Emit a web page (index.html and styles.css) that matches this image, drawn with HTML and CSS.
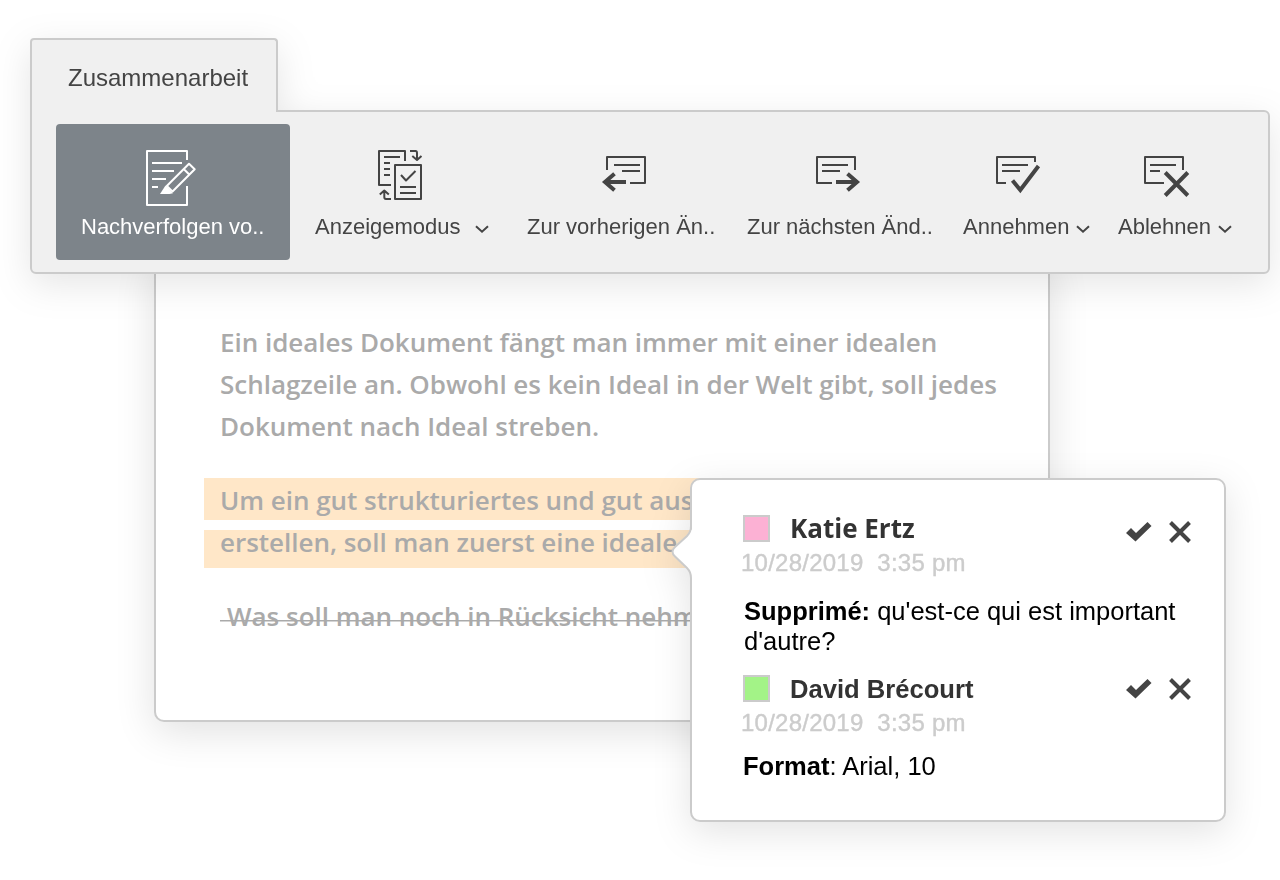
FILE: index.html
```html
<!DOCTYPE html>
<html lang="de">
<head>
<meta charset="utf-8">
<title>Zusammenarbeit</title>
<link rel="stylesheet" href="styles.css">
</head>
<body>
<header class="ribbon">
  <div class="tab">Zusammenarbeit</div>
  <nav class="bar">
    <div class="tool tool-active">
      <svg class="icon icon-track" viewBox="141 144 60 64"><path d="M187 160V151H147V205H187V186M152 163h30M152 171h22M152 179h14M152 187h6"/><path d="M189 163.700L194.700 169.300L172.500 191.500L166.800 186ZM183.700 169L189.500 174.700"/><path class="solid" d="M165.500 185.500L173 193.300L169.500 194H160Z"/></svg>
      <div class="label">Nachverfolgen vo..</div>
    </div>
    <div class="tool">
      <svg class="icon icon-mode" viewBox="370 144 60 64"><path d="M405 161V151H379V185H391M384 157h16M384 163h6M384 169h6M384 175h6M395 165H421V199H395ZM401 175L406 180.500L415.500 171M400 187h16M400 193h16M410 151H415.500Q417 151 417 153V159.500M412.300 156L417 160L421.500 156M391 199H386Q384.300 199 384.300 197V191M379.800 194.500L384.300 190.500L388.800 194.500"/></svg>
      <div class="label">Anzeigemodus<svg class="chev chev-far" viewBox="0 0 14 8"><path d="M1 1.200L7 6.700L13 1.200"/></svg></div>
    </div>
    <div class="tool">
      <svg class="icon icon-prev" viewBox="595 144 60 64"><path d="M607 170V157H645V183H630M614 165h26M622 171h18"/><path class="bold" d="M626 182H605M614.500 173.700L605 182L614.500 190.300"/></svg>
      <div class="label">Zur vorherigen Än..</div>
    </div>
    <div class="tool">
      <svg class="icon icon-next" viewBox="808 144 60 64"><path d="M855 170V157H817V183H832M822 165h26M822 171h18"/><path class="bold" d="M836 182H857M847.500 173.700L857 182L847.500 190.300"/></svg>
      <div class="label">Zur nächsten Änd..</div>
    </div>
    <div class="tool">
      <svg class="icon icon-accept" viewBox="988 144 60 64"><path d="M1035 162V157H997V183H1006M1002 165h26M1002 171h18"/><path class="bold" d="M1012.500 180.500L1020.300 190L1038.500 166"/></svg>
      <div class="label">Annehmen<svg class="chev" viewBox="0 0 14 8"><path d="M1 1.200L7 6.700L13 1.200"/></svg></div>
    </div>
    <div class="tool">
      <svg class="icon icon-reject" viewBox="1137 144 60 64"><path d="M1183 170V157H1145V183H1164M1150 165h26M1150 171h10"/><path class="bold" d="M1165.200 172.500L1187.800 195.500M1187.800 172.500L1165.200 195.500"/></svg>
      <div class="label">Ablehnen<svg class="chev" viewBox="0 0 14 8"><path d="M1 1.200L7 6.700L13 1.200"/></svg></div>
    </div>
  </nav>
</header>

<main class="document">
  <p class="para">Ein ideales Dokument fängt man immer mit einer idealen<br>Schlagzeile an. Obwohl es kein Ideal in der Welt gibt, soll jedes<br>Dokument nach Ideal streben.</p>
  <div class="marked marked-first">Um ein gut strukturiertes und gut aus</div>
  <div class="marked marked-second">erstellen, soll man zuerst eine ideale</div>
  <div class="deleted">Was soll man noch in Rücksicht nehm</div>

  <aside class="callout">
    <svg class="pointer" viewBox="0 0 24 54"><path d="M24 1C22 2 20.500 6 17 10L5 21Q0 25.500 5 30.500L17 42Q21 46 21 52H24Z" fill="#fff"/><path d="M21 0Q21 6 17 10L5 21Q0 25.500 5 30.500L17 42Q21 46 21 52" fill="none" stroke="#cbcbcb" stroke-width="2"/></svg>
    <section class="comment">
      <div class="head"><i class="swatch pink"></i><b class="name name-katie">Katie Ertz</b>
        <svg class="actions" viewBox="0 0 66 22"><path class="solid" d="M0 12L5 7L10 12L21.500 1L25.500 5L9.500 20.500Z"/><path class="cross" d="M44.500 1.500L63.500 20.500M63.500 1.500L44.500 20.500"/></svg></div>
      <time class="date">10/28/2019&nbsp; 3:35 pm</time>
      <p class="text"><b>Supprimé:</b> qu'est-ce qui est important<br>d'autre?</p>
    </section>
    <section class="comment comment-second">
      <div class="head"><i class="swatch green"></i><b class="name name-david">David Brécourt</b>
        <svg class="actions" viewBox="0 0 66 22"><path class="solid" d="M0 12L5 7L10 12L21.500 1L25.500 5L9.500 20.500Z"/><path class="cross" d="M44.500 1.500L63.500 20.500M63.500 1.500L44.500 20.500"/></svg></div>
      <time class="date">10/28/2019&nbsp; 3:35 pm</time>
      <p class="text text-format"><b>Format</b>: Arial, 10</p>
    </section>
  </aside>
</main>
</body>
</html>
```
FILE: styles.css
```css
* { box-sizing: border-box; }
body {
  margin: 0;
  height: 880px;
  overflow: hidden;
  background: #fff;
  color: #444;
  font-family: "Liberation Sans", Arial, sans-serif;
}
svg { display: block; overflow: visible; flex: none; }
p { margin: 0; }

.ribbon {
  position: relative;
  z-index: 2;
  padding: 38px 10px 0 30px;
  filter: drop-shadow(0 10px 18px rgba(0, 0, 0, .1));
}
.tab {
  position: relative;
  z-index: 1;
  width: 248px;
  height: 74px;
  margin-bottom: -2px;
  padding-left: 36px;
  border: 2px solid #cbcbcb;
  border-bottom: 0;
  border-radius: 4px 4px 0 0;
  background: #f0f0f0;
  font-size: 24px;
  line-height: 76px;
}
.bar {
  display: grid;
  grid-template-columns: 259px 212px 220px 216px 155px 1fr;
  height: 164px;
  padding: 12px 0 12px 24px;
  border: 2px solid #cbcbcb;
  border-radius: 0 6px 6px 6px;
  background: #f0f0f0;
}
.tool { padding-top: 20px; height: 136px; }
.tool-active {
  width: 234px;
  padding-left: 25px;
  border-radius: 4px;
  background: #7d848a;
  color: #fff;
}
.icon {
  width: 60px;
  height: 64px;
  fill: none;
  stroke: currentColor;
  stroke-width: 2;
  stroke-linejoin: round;
}
.icon .solid { fill: currentColor; stroke: none; }
.icon .bold { stroke-width: 4; stroke-linejoin: miter; }
.icon-track { margin-left: 60px; }
.icon-mode { margin-left: 55px; }
.icon-prev { margin-left: 68px; }
.icon-next { margin-left: 61px; }
.icon-accept { margin-left: 25px; }
.icon-reject { margin-left: 19px; }
.label {
  display: flex;
  align-items: center;
  height: 38px;
  font-size: 22px;
  line-height: 38px;
  white-space: nowrap;
}
.chev {
  width: 14px;
  height: 8px;
  margin: 4px 0 0 7px;
  fill: none;
  stroke: currentColor;
  stroke-width: 2;
}
.chev-far { margin-left: 14px; }

.document {
  position: relative;
  width: 896px;
  height: 468px;
  margin: -20px 0 0 154px;
  padding: 65px 0 0 48px;
  border: 2px solid #cbcbcb;
  border-radius: 10px;
  background: #fff;
  box-shadow: 0 10px 40px rgba(0, 0, 0, .12);
  color: #aaa;
  font: 600 26px/42px "Open Sans", sans-serif;
  letter-spacing: -.02px;
  white-space: nowrap;
}
.para { margin-left: 16px; }
.marked { width: 560px; padding-left: 16px; background: #ffe7c8; }
.marked-first { height: 42px; margin-top: 31px; line-height: 44px; }
.marked-second { height: 38px; margin-top: 10px; line-height: 24px; }
.deleted {
  width: 500px;
  height: 42px;
  margin: 28px 0 0 16px;
  padding-left: 7px;
  background: linear-gradient(#aaa, #aaa) 0 24px / 100% 1.500px no-repeat;
  line-height: 40px;
}

.callout {
  position: absolute;
  left: 534px;
  top: 222px;
  width: 536px;
  height: 344px;
  padding: 33px 0 0 50px;
  border: 2px solid #cbcbcb;
  border-radius: 10px;
  background: #fff;
  filter: drop-shadow(0 10px 18px rgba(0, 0, 0, .11));
  font-family: "Liberation Sans", Arial, sans-serif;
  font-weight: 400;
  letter-spacing: 0;
}
.pointer { position: absolute; left: -22px; top: 46px; width: 24px; height: 54px; }
.head { display: flex; align-items: center; height: 30px; }
.swatch { width: 27px; height: 27px; border: 2px solid #cbcbcb; margin-left: 1px; }
.pink { background: #fcb1d4; }
.green { background: #a3f387; }
.name { width: 336px; margin-left: 20px; color: #333; font-size: 26px; }
.name-katie { font-family: "Open Sans", sans-serif; font-weight: 700; }
.name-david { padding-top: 2px; font-size: 25.600px; }
.actions { width: 66px; height: 22px; margin-top: 7px; color: #444; }
.actions .solid { fill: #444; }
.actions .cross { stroke: #444; stroke-width: 4; }
.date {
  display: block;
  height: 36px;
  margin-left: -1px;
  color: #ccc;
  font-size: 24px;
  line-height: 40px;
  letter-spacing: .24px;
  -webkit-text-stroke: .4px #ccc;
}
.text { margin: 17px 0 0 2px; color: #000; font-size: 25.500px; line-height: 30px; }
.comment-second { margin-top: 17px; }
.comment-second .actions { margin-top: 2px; }
.text-format { margin: 12px 0 0 1px; }
```
